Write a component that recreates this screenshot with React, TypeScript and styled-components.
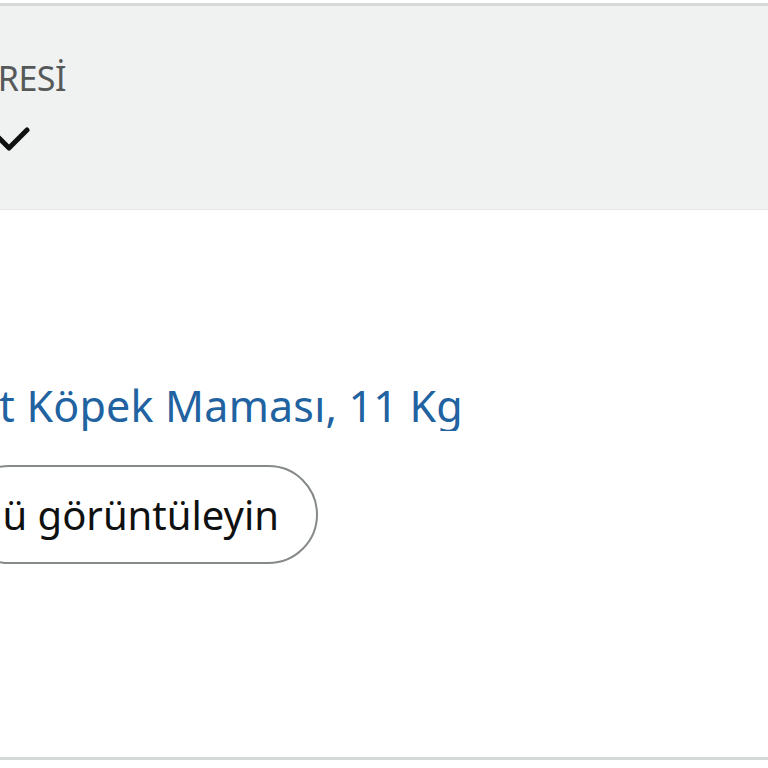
import styled, { createGlobalStyle } from 'styled-components';

const GlobalStyle = createGlobalStyle`
  html, body {
    margin: 0;
    padding: 0;
    background: #ffffff;
    overflow: hidden;
  }
  body {
    font-family: 'Noto Sans', 'Liberation Sans', Arial, sans-serif;
    color: #0f1111;
  }
`;

const Page = styled.div`
  width: 768px;
  height: 768px;
  padding-top: 3px;
  box-sizing: border-box;
  overflow: hidden;
`;

const Card = styled.div`
  border-top: 3px solid #d5d9d9;
  border-bottom: 3px solid #d5d9d9;
`;

const Header = styled.div`
  height: 204px;
  box-sizing: border-box;
  padding-top: 52px;
  background: #f0f2f2;
  border-bottom: 1px solid #e6e8e8;
`;

// The card runs on past the left edge of the view, so each column is a
// right-aligned window: its right edge is fixed, the text start falls off.
const Clip = styled.div<{ $w: number }>`
  width: ${(p) => p.$w}px;
  display: flex;
  justify-content: flex-end;
  overflow: hidden;
  white-space: nowrap;
`;

const Label = styled.span`
  flex-shrink: 0;
  font-size: 34px;
  line-height: 40px;
  color: #565959;
  letter-spacing: -0.5px;
`;

const ChevronRow = styled(Clip)`
  margin-top: 28px;
`;

const Chevron = styled.svg`
  flex-shrink: 0;
  display: block;
`;

const Body = styled.div`
  height: 547px;
  box-sizing: border-box;
  padding-top: 171px;
`;

const Title = styled.a`
  flex-shrink: 0;
  font-size: 43px;
  line-height: 50px;
  color: #2162a1;
  text-decoration: none;
  letter-spacing: 0.2px;
`;

const ButtonClip = styled(Clip)`
  margin-top: 34px;
`;

const PillButton = styled.button`
  flex-shrink: 0;
  height: 99px;
  box-sizing: border-box;
  padding: 0 37px 0 40px;
  border: 2px solid #858989;
  border-radius: 50px;
  background: #ffffff;
  font-family: inherit;
  font-size: 40px;
  color: #0f1111;
  white-space: nowrap;
`;

export default function App() {
  return (
    <Page>
      <GlobalStyle />
      <Card>
        <Header>
          <Clip $w={66}>
            <Label>RESİ</Label>
          </Clip>
          <ChevronRow $w={30}>
            <Chevron width="42" height="26" viewBox="0 0 42 26">
              <polyline
                points="3,4 21,22 39,4"
                fill="none"
                stroke="#0f1111"
                strokeWidth="5"
                strokeLinecap="round"
                strokeLinejoin="round"
              />
            </Chevron>
          </ChevronRow>
        </Header>
        <Body>
          <Clip $w={463}>
            <Title href="#">t Köpek Maması, 11 Kg</Title>
          </Clip>
          <ButtonClip $w={318}>
            <PillButton>ü görüntüleyin</PillButton>
          </ButtonClip>
        </Body>
      </Card>
    </Page>
  );
}
